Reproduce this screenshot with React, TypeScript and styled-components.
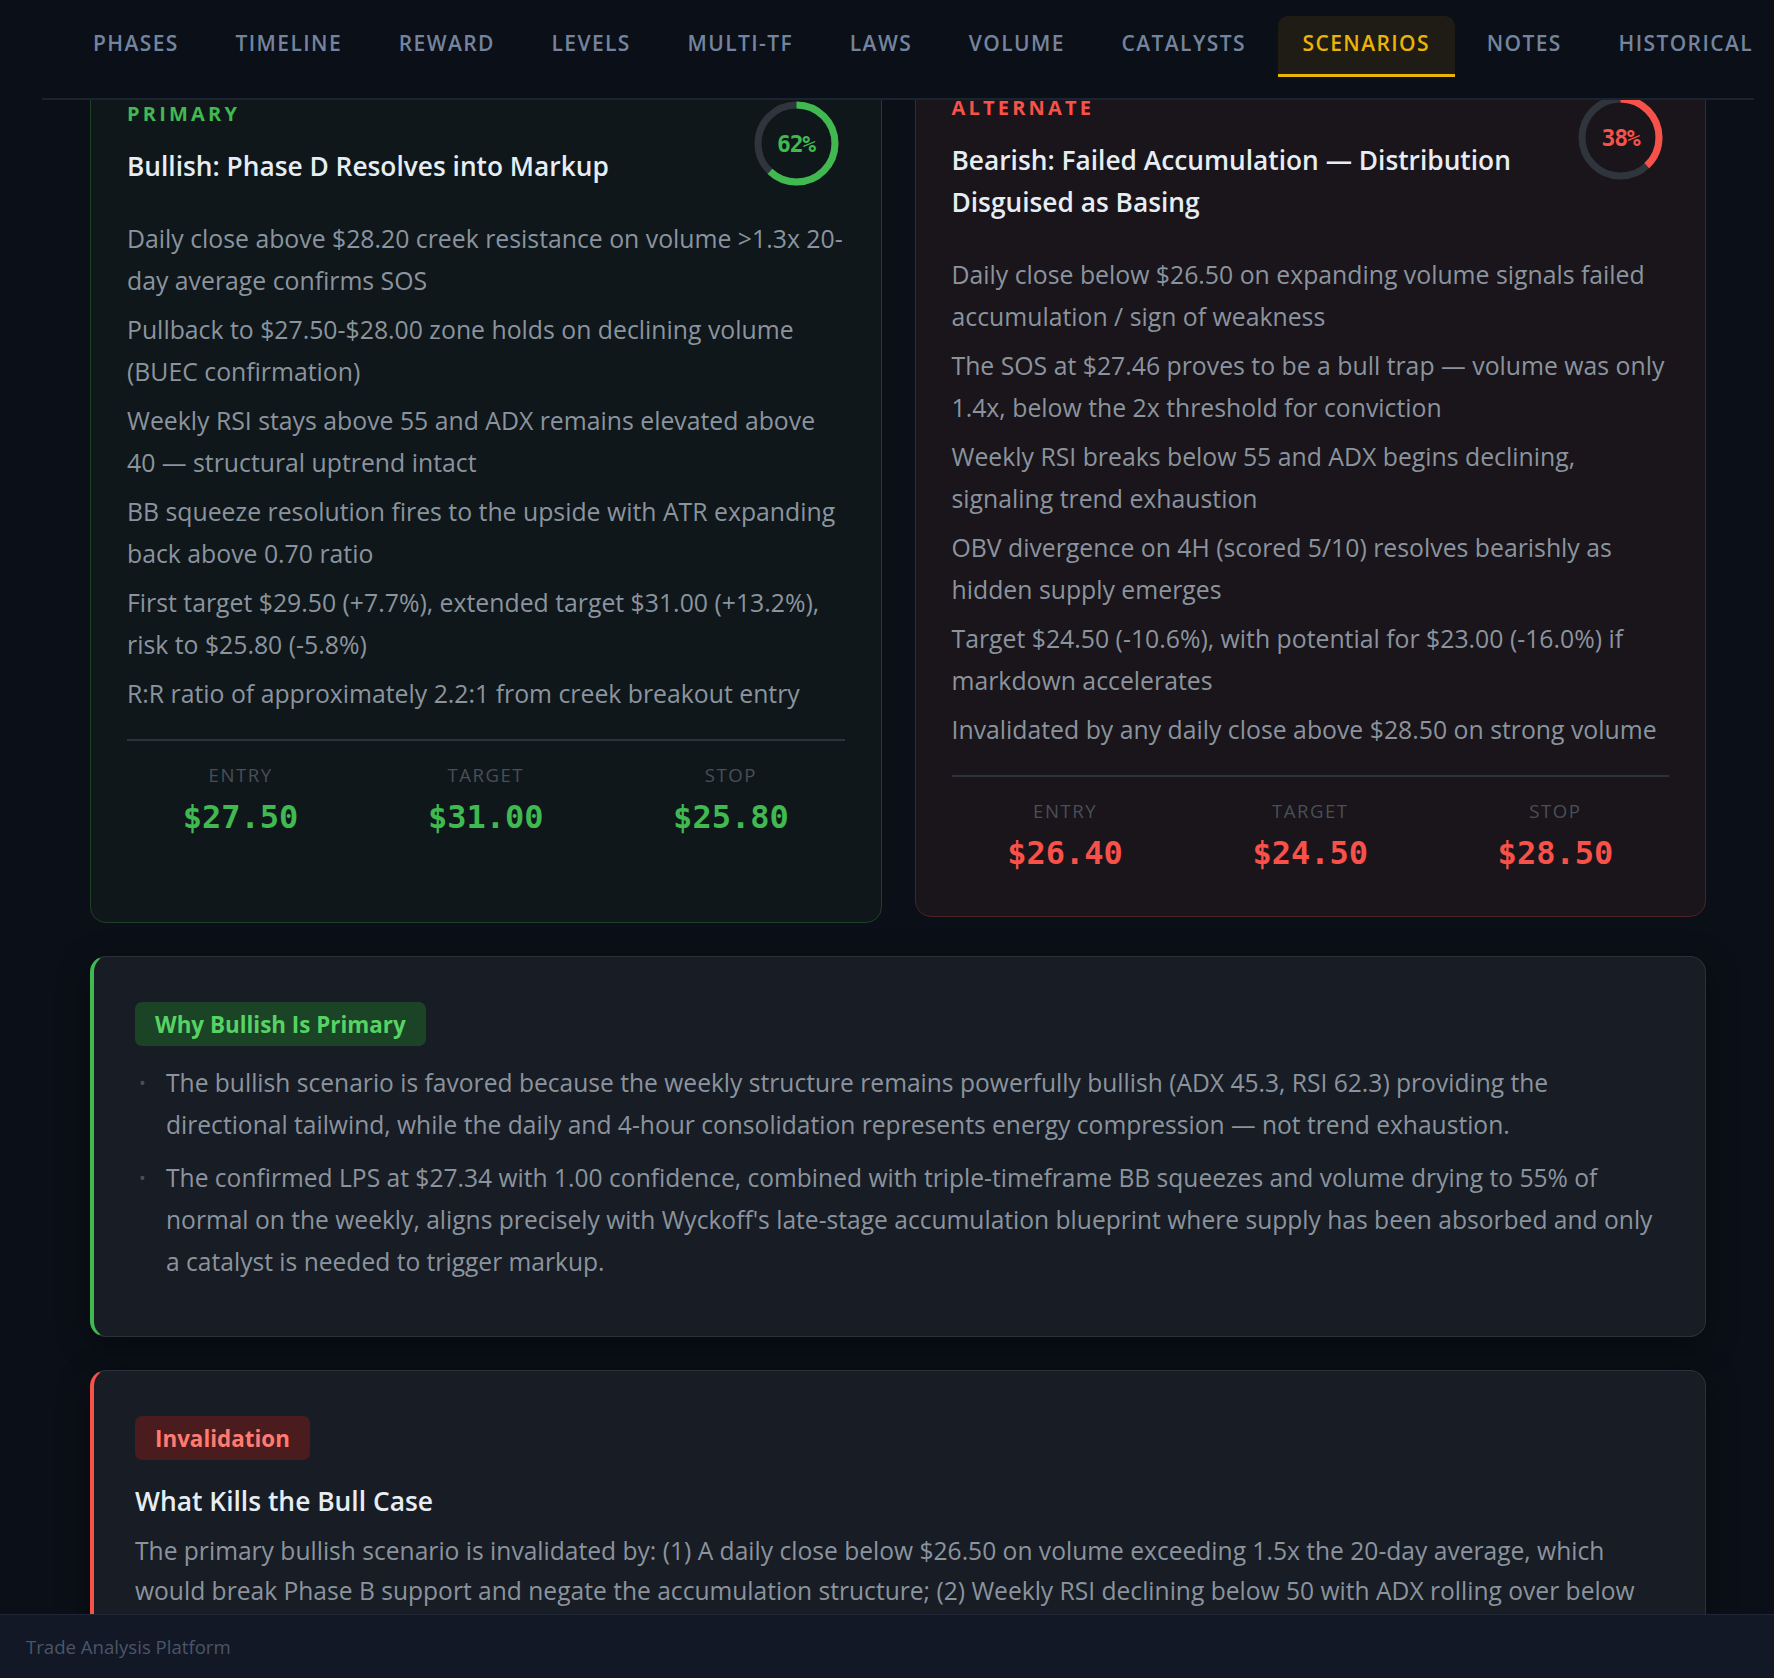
import React, { useLayoutEffect, useRef } from 'react';
import styled, { createGlobalStyle } from 'styled-components';

const SANS = `"Open Sans", "Noto Sans", "DejaVu Sans", sans-serif`;
const MONO = `"DejaVu Sans Mono", "Liberation Mono", monospace`;

type Tone = 'bull' | 'bear';

const palette = {
  bull: {
    accent: '#3fb950',
    cardBg: '#0f171b',
    cardBorder: '#1d4127',
    pillBg: '#1b4326',
    pillText: '#56d364',
  },
  bear: {
    accent: '#f85149',
    cardBg: '#19151a',
    cardBorder: '#4d2226',
    pillBg: '#4a1c1d',
    pillText: '#ff7b72',
  },
};

const GlobalStyle = createGlobalStyle`
  html, body {
    margin: 0;
    padding: 0;
    height: 100%;
    overflow: hidden;
    background: #0b0f17;
    font-family: ${SANS};
  }
  #root { height: 100%; }
  *, *::before, *::after { box-sizing: border-box; }
`;

const Shell = styled.div`
  height: 100vh;
  display: flex;
  flex-direction: column;
  background: #0b0f17;
`;

const Frame = styled.div`
  flex: 1;
  min-height: 0;
  display: flex;
  flex-direction: column;
  margin: 0 20px 0 42px;
`;

const TabBar = styled.nav`
  flex: none;
  display: flex;
  gap: 6.7px;
  padding: 16px 26px 21px;
  border-bottom: 2px solid #1c2330;
  overflow: hidden;
`;

const Tab = styled.div<{ $active?: boolean }>`
  flex: none;
  height: 61px;
  display: flex;
  align-items: center;
  padding: 0 25px 4px;
  border-radius: 10px 10px 0 0;
  border-bottom: 3px solid ${(p) => (p.$active ? '#eab308' : 'transparent')};
  background: ${(p) => (p.$active ? '#1f1c15' : 'transparent')};
  color: ${(p) => (p.$active ? '#eab308' : '#74849e')};
  font-family: ${SANS};
  font-size: 21px;
  font-weight: 600;
  letter-spacing: 1.4px;
  text-transform: uppercase;
  white-space: nowrap;
`;

const Scroll = styled.main`
  flex: 1;
  min-height: 0;
  overflow-y: auto;
  scrollbar-width: none;
  &::-webkit-scrollbar { display: none; }
`;

const Content = styled.div`
  padding: 32px 48px 120px;
  display: flex;
  flex-direction: column;
  gap: 33px;
`;

const ScenarioGrid = styled.div`
  display: grid;
  grid-template-columns: 1fr 1fr;
  gap: 33px;
`;

const Card = styled.article<{ $tone: Tone; $raised?: boolean }>`
  display: flex;
  flex-direction: column;
  padding: 37px 36px 39px;
  border: 1px solid ${(p) => palette[p.$tone].cardBorder};
  border-radius: 16px;
  background: ${(p) => palette[p.$tone].cardBg};
  transform: ${(p) => (p.$raised ? 'translateY(-6px)' : 'none')};
`;

const CardHead = styled.header`
  display: flex;
  justify-content: space-between;
  align-items: flex-start;
  gap: 24px;
`;

const HeadText = styled.div`
  display: flex;
  flex-direction: column;
`;

const Label = styled.div<{ $tone: Tone }>`
  font-size: 20px;
  line-height: 31px;
  font-weight: 700;
  letter-spacing: 3.2px;
  color: ${(p) => palette[p.$tone].accent};
  text-transform: uppercase;
`;

const Title = styled.h3`
  margin: 16px 0 0;
  font-size: 26.3px;
  line-height: 42px;
  font-weight: 600;
  color: #e6edf3;
`;

const RingWrap = styled.div`
  position: relative;
  flex: none;
  width: 85px;
  height: 85px;
  margin: 3px 6px 0 0;
`;

const RingText = styled.span<{ $tone: Tone }>`
  position: absolute;
  inset: 0;
  display: flex;
  align-items: center;
  justify-content: center;
  font-family: ${MONO};
  font-weight: 700;
  font-size: 23px;
  letter-spacing: -1.2px;
  color: ${(p) => palette[p.$tone].accent};
`;

const BulletList = styled.ul`
  list-style: none;
  margin: 30px 0 0;
  padding: 0;
  display: flex;
  flex-direction: column;
  gap: 7px;
`;

const Bullet = styled.li`
  font-size: 24.8px;
  line-height: 42px;
  color: #8b949e;
`;

const Divider = styled.hr`
  margin: 25px 0 0;
  border: none;
  height: 2px;
  background: #2d333b;
`;

const Stats = styled.div`
  display: grid;
  grid-template-columns: repeat(3, 1fr);
  gap: 18px;
  padding-top: 20px;
`;

const Stat = styled.div`
  display: flex;
  flex-direction: column;
  align-items: center;
`;

const StatLabel = styled.span`
  font-size: 18.6px;
  line-height: 28px;
  letter-spacing: 1.5px;
  color: #484f58;
  text-transform: uppercase;
`;

const StatValue = styled.span<{ $tone: Tone }>`
  margin-top: 4px;
  font-family: ${MONO};
  font-size: 32px;
  line-height: 48px;
  font-weight: 700;
  color: ${(p) => palette[p.$tone].accent};
`;

const Section = styled.section<{ $tone: Tone }>`
  background: #181c24;
  border: 1px solid #2b313b;
  border-left: 4px solid ${(p) => palette[p.$tone].accent};
  border-radius: 16px;
  padding: 45px 40px 53px 41px;
  box-shadow: 0 8px 32px rgba(0, 0, 0, 0.35);
`;

const Pill = styled.span<{ $tone: Tone }>`
  display: inline-flex;
  align-items: center;
  height: 44px;
  padding: 0 20px;
  border-radius: 7px;
  background: ${(p) => palette[p.$tone].pillBg};
  color: ${(p) => palette[p.$tone].pillText};
  font-size: 22.4px;
  font-weight: 700;
`;

const ReasonList = styled.ul`
  list-style: none;
  margin: 16px 0 0;
  padding: 0;
  display: flex;
  flex-direction: column;
  gap: 11px;
`;

const Reason = styled.li`
  display: grid;
  grid-template-columns: 31px 1fr;
  font-size: 24.6px;
  line-height: 42px;
  color: #8b949e;
`;

const Dot = styled.span`
  color: #484f58;
  font-size: 18px;
  padding-left: 4px;
`;

const SectionTitle = styled.h3`
  margin: 20px 0 0;
  font-size: 26.4px;
  line-height: 42px;
  font-weight: 600;
  color: #e6edf3;
`;

const Paragraph = styled.p`
  margin: 9px 0 0;
  font-size: 24.6px;
  line-height: 40px;
  color: #8b949e;
`;

const Footer = styled.footer`
  flex: none;
  height: 64px;
  display: flex;
  align-items: center;
  padding-left: 26px;
  background: #121826;
  border-top: 1px solid #1f2737;
  color: #4b5567;
  font-size: 18.6px;
`;

const Ring: React.FC<{ value: number; tone: Tone }> = ({ value, tone }) => {
  const r = 38.5;
  const c = 2 * Math.PI * r;
  return (
    <RingWrap>
      <svg width="85" height="85" viewBox="0 0 85 85">
        <circle cx="42.5" cy="42.5" r={r} fill="none" stroke="#30353d" strokeWidth="7" />
        <circle
          cx="42.5"
          cy="42.5"
          r={r}
          fill="none"
          stroke={palette[tone].accent}
          strokeWidth="7"
          strokeDasharray={`${(c * value) / 100} ${c}`}
          transform="rotate(-90 42.5 42.5)"
        />
      </svg>
      <RingText $tone={tone}>{value}%</RingText>
    </RingWrap>
  );
};

type Scenario = {
  tone: Tone;
  label: string;
  title: string;
  prob: number;
  bullets: string[];
  stats: [string, string][];
  raised?: boolean;
};

const scenarios: Scenario[] = [
  {
    tone: 'bull',
    label: 'Primary',
    title: 'Bullish: Phase D Resolves into Markup',
    prob: 62,
    bullets: [
      'Daily close above $28.20 creek resistance on volume >1.3x 20-day average confirms SOS',
      'Pullback to $27.50-$28.00 zone holds on declining volume (BUEC confirmation)',
      'Weekly RSI stays above 55 and ADX remains elevated above 40 \u2014 structural uptrend intact',
      'BB squeeze resolution fires to the upside with ATR expanding back above 0.70 ratio',
      'First target $29.50 (+7.7%), extended target $31.00 (+13.2%), risk to $25.80 (-5.8%)',
      'R:R ratio of approximately 2.2:1 from creek breakout entry',
    ],
    stats: [
      ['Entry', '$27.50'],
      ['Target', '$31.00'],
      ['Stop', '$25.80'],
    ],
  },
  {
    tone: 'bear',
    label: 'Alternate',
    title: 'Bearish: Failed Accumulation \u2014 Distribution Disguised as Basing',
    prob: 38,
    raised: true,
    bullets: [
      'Daily close below $26.50 on expanding volume signals failed accumulation / sign of weakness',
      'The SOS at $27.46 proves to be a bull trap \u2014 volume was only 1.4x, below the 2x threshold for conviction',
      'Weekly RSI breaks below 55 and ADX begins declining, signaling trend exhaustion',
      'OBV divergence on 4H (scored 5/10) resolves bearishly as hidden supply emerges',
      'Target $24.50 (-10.6%), with potential for $23.00 (-16.0%) if markdown accelerates',
      'Invalidated by any daily close above $28.50 on strong volume',
    ],
    stats: [
      ['Entry', '$26.40'],
      ['Target', '$24.50'],
      ['Stop', '$28.50'],
    ],
  },
];

const tabs = [
  'Phases',
  'Timeline',
  'Reward',
  'Levels',
  'Multi-TF',
  'Laws',
  'Volume',
  'Catalysts',
  'Scenarios',
  'Notes',
  'Historical',
];

const reasons = [
  'The bullish scenario is favored because the weekly structure remains powerfully bullish (ADX 45.3, RSI 62.3) providing the directional tailwind, while the daily and 4-hour consolidation represents energy compression \u2014 not trend exhaustion.',
  "The confirmed LPS at $27.34 with 1.00 confidence, combined with triple-timeframe BB squeezes and volume drying to 55% of normal on the weekly, aligns precisely with Wyckoff's late-stage accumulation blueprint where supply has been absorbed and only a catalyst is needed to trigger markup.",
];

export default function App() {
  const scrollRef = useRef<HTMLElement>(null);

  useLayoutEffect(() => {
    if (scrollRef.current) scrollRef.current.scrollTop = 72;
  }, []);

  return (
    <>
      <GlobalStyle />
      <Shell>
        <Frame>
          <TabBar>
            {tabs.map((t) => (
              <Tab key={t} $active={t === 'Scenarios'}>
                {t}
              </Tab>
            ))}
          </TabBar>
          <Scroll ref={scrollRef}>
            <Content>
              <ScenarioGrid>
                {scenarios.map((s) => (
                  <Card key={s.label} $tone={s.tone} $raised={s.raised}>
                    <CardHead>
                      <HeadText>
                        <Label $tone={s.tone}>{s.label}</Label>
                        <Title>{s.title}</Title>
                      </HeadText>
                      <Ring value={s.prob} tone={s.tone} />
                    </CardHead>
                    <BulletList>
                      {s.bullets.map((b) => (
                        <Bullet key={b}>{b}</Bullet>
                      ))}
                    </BulletList>
                    <Divider />
                    <Stats>
                      {s.stats.map(([k, v]) => (
                        <Stat key={k}>
                          <StatLabel>{k}</StatLabel>
                          <StatValue $tone={s.tone}>{v}</StatValue>
                        </Stat>
                      ))}
                    </Stats>
                  </Card>
                ))}
              </ScenarioGrid>

              <Section $tone="bull">
                <Pill $tone="bull">Why Bullish Is Primary</Pill>
                <ReasonList>
                  {reasons.map((r) => (
                    <Reason key={r}>
                      <Dot>{'\u2022'}</Dot>
                      <span>{r}</span>
                    </Reason>
                  ))}
                </ReasonList>
              </Section>

              <Section $tone="bear">
                <Pill $tone="bear">Invalidation</Pill>
                <SectionTitle>What Kills the Bull Case</SectionTitle>
                <Paragraph>
                  The primary bullish scenario is invalidated by: (1) A daily close below $26.50 on volume
                  exceeding 1.5x the 20-day average, which would break Phase B support and negate the
                  accumulation structure; (2) Weekly RSI declining below 50 with ADX rolling over below 40,
                  signaling loss of the structural uptrend; (3) A failed retest of the $27.34 LPS on
                  expanding supply.
                </Paragraph>
              </Section>
            </Content>
          </Scroll>
        </Frame>
        <Footer>Trade Analysis Platform</Footer>
      </Shell>
    </>
  );
}
